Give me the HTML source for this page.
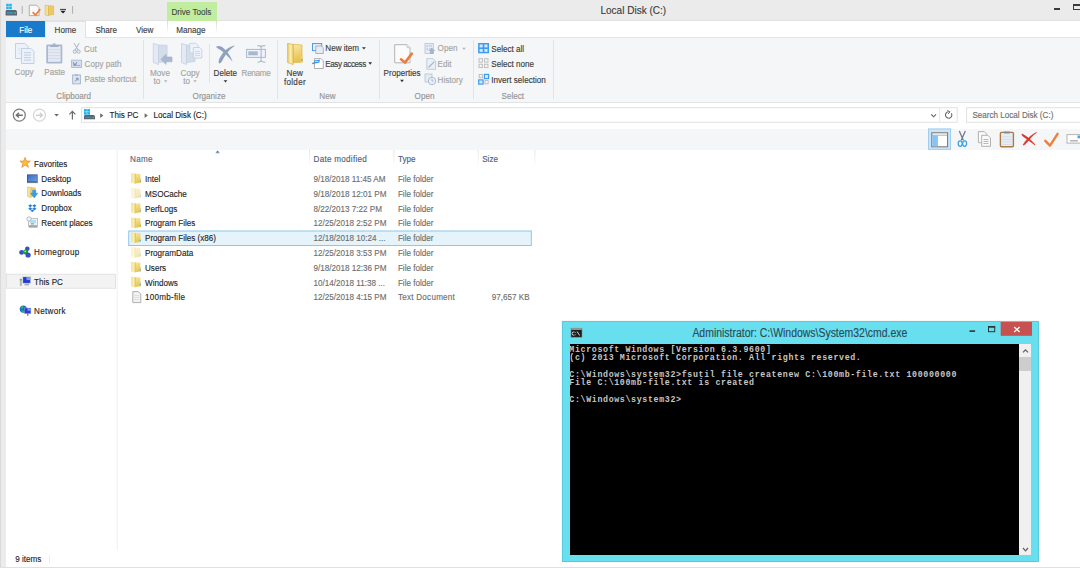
<!DOCTYPE html>
<html><head><meta charset="utf-8">
<style>
*{margin:0;padding:0;box-sizing:border-box}
html,body{width:1080px;height:568px;overflow:hidden;background:#fff}
body{position:relative;font-family:"Liberation Sans",sans-serif;font-size:8px;color:#1e1e1e}
.a{position:absolute}
.t{position:absolute;white-space:pre;line-height:8px;font-size:8.1px;transform:translateY(0.7px) scaleY(1.15);transform-origin:0 4px;-webkit-text-stroke:0.12px currentColor}
.cm{position:absolute;left:569.3px;font-family:'Liberation Mono',monospace;font-weight:bold;font-size:8.3px;line-height:8px;letter-spacing:0.64px;color:#c6c6c6;white-space:pre}
.dis{color:#a3a3a3}
.lbl{color:#939393}
</style></head><body>
<!-- window frame / title bar -->
<div class="a" style="left:0;top:0;width:1080px;height:20.5px;background:#ebebeb"></div>
<div class="a" style="left:0;top:0;width:6px;height:568px;background:#ebebeb"></div>
<div class="a" style="left:0;top:0;width:1px;height:568px;background:#dadada"></div>
<div class="a" style="left:0;top:567px;width:1080px;height:1px;background:#e0e0e0"></div>
<div class="a" style="left:6px;top:20px;width:1074px;height:1px;background:#e2e2e2"></div>

<!-- tab row -->
<div class="a" style="left:6px;top:21px;width:1074px;height:16px;background:#fff"></div>
<!-- ribbon body -->
<div class="a" style="left:6px;top:37px;width:1074px;height:65.5px;background:#f5f6f7;border-top:1px solid #e4e5e6;border-bottom:1px solid #e2e3e4"></div>
<!-- address row -->
<div class="a" style="left:6px;top:103px;width:1074px;height:25px;background:#fff"></div>
<!-- toolbar strip -->
<div class="a" style="left:6px;top:128.8px;width:1074px;height:20.9px;background:#f5f6f7"></div>

<svg class="a" style="left:0;top:0" width="1080" height="568" viewBox="0 0 1080 568">
<!-- Copy large -->
<g stroke="#c3cfe2" stroke-width="1" fill="#edf2fa">
<path d="M15.5 43.5 H25 L28 46.5 V58.5 H15.5 Z"/>
<path d="M21.5 48.5 H31 L34 51.5 V63.5 H21.5 Z"/>
</g>
<g fill="#c9d4e6"><rect x="24" y="52" width="7" height="1.2"/><rect x="24" y="54.5" width="7" height="1.2"/><rect x="24" y="57" width="7" height="1.2"/><rect x="24" y="59.5" width="7" height="1.2"/></g>
<g fill="#dfe6f1"><rect x="18" y="48" width="3" height="1"/><rect x="18" y="50.5" width="3" height="1"/><rect x="18" y="53" width="3" height="1"/></g>
<!-- Paste large -->
<rect x="46.3" y="44.4" width="16" height="19" rx="1.2" fill="#a9b7cf"/>
<rect x="48" y="46.2" width="12.6" height="15.6" fill="#e3e9f3"/>
<g fill="#d0d9e8"><rect x="48" y="49" width="12.6" height="0.8"/><rect x="48" y="52" width="12.6" height="0.8"/><rect x="48" y="55" width="12.6" height="0.8"/><rect x="48" y="58" width="12.6" height="0.8"/></g>
<rect x="50" y="45.3" width="8.6" height="1.6" fill="#9eadc8"/>
<ellipse cx="54.2" cy="44.3" rx="1.6" ry="1.1" fill="#a9b7cf"/>
<!-- Cut small -->
<g stroke="#a2b2cb" stroke-width="1" fill="none">
<path d="M74 43.2 L78.3 50.2 M79.2 43.2 L75 50.2"/>
<circle cx="74.8" cy="51.6" r="1.6"/><circle cx="78.6" cy="51.6" r="1.6"/>
</g>
<!-- Copy path -->
<rect x="71.6" y="60.2" width="10" height="7.2" fill="#d6dff0" stroke="#a9b8d0" stroke-width="0.9"/>
<path d="M73.3 62 L74.2 65.8 L75 63.5 L75.8 65.8 L76.7 62" stroke="#7487a6" stroke-width="0.8" fill="none"/>
<rect x="77.2" y="65" width="3" height="0.8" fill="#8d9fbb"/>
<!-- Paste shortcut -->
<rect x="72.6" y="75" width="7.8" height="8.8" fill="#dde5f2" stroke="#a9b8d0" stroke-width="1"/>
<rect x="74.8" y="74.2" width="3.4" height="1.5" fill="#a9b8d0"/>
<path d="M74.8 81.5 L77.8 78.5 M75.8 78.3 H78 V80.5" stroke="#6d82a4" stroke-width="0.9" fill="none"/>
<!-- Move to -->
<path d="M153.3 43.5 L158.5 45 V64.5 L153.3 62.5 Z" fill="#e3eaf5" stroke="#c4cfe0" stroke-width="0.8"/>
<path d="M158.5 45 L167 45.3 V61.5 L158.5 62.5 Z" fill="#d3ddec" stroke="#c4cfe0" stroke-width="0.8"/>
<path d="M161 59.3 L166 54.3 V57 H172 V61.8 H166 V64.5 Z" fill="#aab9d1" stroke="#9fb0cb" stroke-width="0.6"/>
<!-- Copy to -->
<path d="M181.5 43.5 L186.5 45 V64.5 L181.5 62.5 Z" fill="#e3eaf5" stroke="#c4cfe0" stroke-width="0.8"/>
<path d="M186.5 45 L195 45.3 V61.5 L186.5 62.5 Z" fill="#d3ddec" stroke="#c4cfe0" stroke-width="0.8"/>
<path d="M189.8 43.3 H196 L198 45.3 V53 H189.8 Z" fill="#eef3fa" stroke="#c4cfe0" stroke-width="0.8"/>
<path d="M193.3 47.5 H199.8 L201.8 49.5 V58 H193.3 Z" fill="#eef3fa" stroke="#c0cce0" stroke-width="0.8"/>
<g fill="#ccd6e6"><rect x="195" y="51" width="5" height="0.9"/><rect x="195" y="53" width="5" height="0.9"/><rect x="195" y="55" width="5" height="0.9"/></g>
<!-- Delete X -->
<path d="M216 46.8 C 219 44.8, 223 47, 226 50.5 C 229 54, 231.5 58, 232.5 61.8 C 230 58.5, 226.5 55, 223 52 C 220 49.5, 217 48.5, 216 46.8 Z" fill="#8ea1bf"/>
<path d="M235.3 45.5 C 231 46, 226 49, 222.5 53.5 C 219.5 57.5, 218 61, 218.8 63.3 C 220.8 64, 222 61, 224 57.5 C 227 52.5, 231 48, 235.3 45.5 Z" fill="#8ea1bf"/>
<!-- Rename -->
<rect x="246.6" y="49.4" width="18.8" height="8" fill="#eef3fb" stroke="#a9b8cf" stroke-width="1"/>
<rect x="248.3" y="51.3" width="9.5" height="4" fill="#a9b8cf"/>
<path d="M261.1 45.8 V62 M257.5 45.6 C259.5 45.6 261.1 46.5 261.1 47.5 C261.1 46.5 262.7 45.6 265.3 45.6 M257.5 62.2 C259.5 62.2 261.1 61.3 261.1 60.3 C261.1 61.3 262.7 62.2 265.3 62.2" stroke="#a9b8cf" stroke-width="1.1" fill="none"/>
<!-- New folder -->
<defs><linearGradient id="nfflap" x1="0" y1="0" x2="1" y2="0"><stop offset="0" stop-color="#eccb5f"/><stop offset="0.55" stop-color="#fbefb6"/><stop offset="1" stop-color="#efd06a"/></linearGradient>
<linearGradient id="nfback" x1="0" y1="0" x2="0.2" y2="1"><stop offset="0" stop-color="#faeaa6"/><stop offset="1" stop-color="#e8c04a"/></linearGradient></defs>
<path d="M293 44.3 L302 45 V62.3 L293 62.5 Z" fill="url(#nfback)" stroke="#dcb44a" stroke-width="0.7"/>
<path d="M287.6 43.3 L293.2 44.6 V64.6 L287.6 62.6 Z" fill="url(#nfflap)" stroke="#d9b04a" stroke-width="0.7"/>
<rect x="300.5" y="55.5" width="2.5" height="7" fill="#ecd27c"/>
<circle cx="301.8" cy="60" r="0.9" fill="#5fb3cc"/>
<!-- New item -->
<rect x="312.5" y="43.6" width="9.2" height="7" fill="#e8f1fb" stroke="#4b9be0" stroke-width="1"/>
<path d="M315.8 46 H321.5 L323.3 47.8 V53.5 H315.8 Z" fill="#e6ecf4" stroke="#9aa2ae" stroke-width="0.8"/>
<!-- Easy access -->
<path d="M314.5 58.6 H321 L323.3 60.9 V68.5 H314.5 Z" fill="#fff" stroke="#a5a5a5" stroke-width="0.9"/>
<path d="M312.3 63.8 C313.5 62.5 316 62.5 318.8 62.3 L319.3 60.2 C317 60.5 315 60.8 314 61.2" stroke="#3a8ee6" stroke-width="1.1" fill="none"/>
<!-- Properties -->
<path d="M394.7 44.7 H407 L410 47.7 V62.8 H394.7 Z" fill="#fbfbfb" stroke="#b4b4b4" stroke-width="1"/>
<path d="M407 44.7 V47.7 H410" fill="#ececec" stroke="#c4c4c4" stroke-width="0.8"/>
<path d="M401 59.3 L405 62.6 L411.8 53.6" stroke="#ec7d3f" stroke-width="2.6" fill="none" stroke-linecap="round" stroke-linejoin="round"/>
<!-- Open small -->
<rect x="425" y="43.5" width="8.3" height="10" fill="#e5ebf4" stroke="#b5c2d6" stroke-width="0.8"/>
<g fill="#a9b7cc"><rect x="426.5" y="45.5" width="1.5" height="1.2"/><rect x="429" y="45.5" width="3" height="0.8"/><rect x="426.5" y="48.5" width="1.5" height="1.2"/><rect x="429" y="48.5" width="3" height="0.8"/></g>
<path d="M430 54 V51 H428.3 L431.8 47.8 L435.3 51 H433.6 V54 Z" fill="#a4b4cc"/>
<!-- Edit small -->
<path d="M426.8 58.6 H433 L435.6 61.2 V69.3 H426.8 Z" fill="#eaf0f8" stroke="#b5c2d6" stroke-width="0.8"/>
<path d="M428.5 67.5 L434.3 61.7" stroke="#a4b4cc" stroke-width="1.2"/>
<!-- History small -->
<rect x="425" y="74" width="7" height="8" fill="#e5ebf4" stroke="#b5c2d6" stroke-width="0.8"/>
<circle cx="432" cy="81" r="3.7" fill="#eaf0f8" stroke="#a4b4cc" stroke-width="0.9"/>
<path d="M432 79 V81 H433.5" stroke="#8fa1bd" stroke-width="0.7" fill="none"/>
<!-- Select all -->
<rect x="478.1" y="43" width="10.9" height="10.3" fill="#3e9cf2"/>
<g fill="#d4e9ff"><rect x="479.6" y="44.5" width="3.1" height="2.9"/><rect x="484.4" y="44.5" width="3.1" height="2.9"/><rect x="479.6" y="49" width="3.1" height="2.9"/><rect x="484.4" y="49" width="3.1" height="2.9"/></g>
<!-- Select none -->
<g fill="none" stroke="#b8b8b8" stroke-width="0.9"><rect x="479" y="58.7" width="3.4" height="3.4"/><rect x="484.6" y="58.7" width="3.4" height="3.4"/><rect x="479" y="64.2" width="3.4" height="3.4"/><rect x="484.6" y="64.2" width="3.4" height="3.4"/></g>
<!-- Invert -->
<g fill="none" stroke="#b8b8b8" stroke-width="0.9"><rect x="479.2" y="74.5" width="3.2" height="3.2"/><rect x="485" y="80.6" width="3.2" height="3.2"/></g>
<rect x="483.8" y="73.8" width="5.4" height="5.4" fill="#3e9cf2"/><rect x="485" y="75" width="3" height="3" fill="#cfe6ff"/>
<rect x="478.1" y="79.3" width="5.6" height="5.4" fill="#3e9cf2"/><rect x="479.3" y="80.5" width="3.2" height="3" fill="#cfe6ff"/>
</svg>

<svg class="a" style="left:0;top:0" width="1080" height="568" viewBox="0 0 1080 568">
<!-- back/forward -->
<circle cx="19.3" cy="115.1" r="6" fill="none" stroke="#7b7b7b" stroke-width="1.2"/>
<path d="M22.8 115.2 H16.5 M19 112.8 L16.3 115.2 L19 117.6" fill="none" stroke="#6f6f6f" stroke-width="1.4"/>
<circle cx="39.5" cy="115.1" r="6" fill="none" stroke="#d6d6d6" stroke-width="1.2"/>
<path d="M36 115.2 H42.3 M39.8 112.8 L42.5 115.2 L39.8 117.6" fill="none" stroke="#d0d0d0" stroke-width="1.4"/>
<path d="M54.3 114 H58.9 L56.6 116.6 Z" fill="#6b6b6b"/>
<path d="M72.4 111.6 V119.4 M69.4 114.4 L72.4 111.4 L75.4 114.4" fill="none" stroke="#6b6b6b" stroke-width="1.2"/>
<!-- address box -->
<rect x="81.6" y="107.7" width="875.6" height="14.6" fill="#fff" stroke="#e1e1e1" stroke-width="1"/>
<line x1="939.7" y1="108" x2="939.7" y2="122" stroke="#e6e6e6" stroke-width="1"/>
<path d="M931.2 114.3 L933.6 116.8 L936 114.3" fill="none" stroke="#5f5f5f" stroke-width="1.1"/>
<path d="M951.3 113.2 A3.2 3.2 0 1 1 948.5 111.8" fill="none" stroke="#666" stroke-width="1.1"/>
<path d="M947.3 110.5 L950 111.9 L948 114" fill="none" stroke="#666" stroke-width="1"/>
<rect x="966.6" y="107.7" width="120" height="14.6" fill="#fff" stroke="#e1e1e1" stroke-width="1"/>
<!-- drive icon in address -->
<g fill="#1fb3ef"><rect x="84" y="109.1" width="2.8" height="2.6"/><rect x="87.2" y="109.1" width="2.8" height="2.6"/><rect x="84" y="112.1" width="2.8" height="2.6"/><rect x="87.2" y="112.1" width="2.8" height="2.6"/></g>
<path d="M84.5 115 H94 L95 116.5 V119.3 H84 V116.5 Z" fill="#56636f"/>
<rect x="85.2" y="116.6" width="6" height="1.5" fill="#3b8fc9"/>
<rect x="92.5" y="116.8" width="1.3" height="1.3" fill="#5fd35a"/>
<path d="M100.2 113.3 L103.4 115.6 L100.2 117.9 Z" fill="#6b6b6b"/>
<path d="M144.6 113.3 L147.8 115.6 L144.6 117.9 Z" fill="#6b6b6b"/>
</svg>
<div class="t" style="left:109.6px;top:110.9px;color:#1e1e1e">This PC</div>
<div class="t" style="left:153.6px;top:110.9px;color:#1e1e1e">Local Disk (C:)</div>
<div class="t" style="left:972.4px;top:111.3px;color:#6d6d6d">Search Local Disk (C:)</div>

<svg class="a" style="left:0;top:0" width="1080" height="568" viewBox="0 0 1080 568">
<!-- toolbar: preview pane selected -->
<rect x="928.5" y="128.9" width="22" height="20.5" fill="#cde4f7" stroke="#9fcdf1" stroke-width="1"/>
<rect x="931.8" y="132.8" width="15.8" height="14" fill="#fff" stroke="#727272" stroke-width="1"/>
<rect x="932.3" y="135.6" width="5.6" height="10.7" fill="#86c3f6"/>
<line x1="932" y1="135.2" x2="947.5" y2="135.2" stroke="#9a9a9a" stroke-width="0.8"/>
<!-- scissors -->
<path d="M959.3 131 L963.3 140.3 M965.3 131 L961.3 140.3" stroke="#6f7c8c" stroke-width="1.3" fill="none"/>
<ellipse cx="960.2" cy="143.6" rx="2" ry="2.8" fill="none" stroke="#3ba3e2" stroke-width="1.3"/>
<ellipse cx="964.6" cy="143.6" rx="2" ry="2.8" fill="none" stroke="#3ba3e2" stroke-width="1.3"/>
<!-- copy -->
<path d="M978.4 131.6 H984.3 L986.8 134.1 V142.7 H978.4 Z" fill="#fafafa" stroke="#a9a9a9" stroke-width="0.9"/>
<path d="M981.7 135.3 H987.8 L990.5 138 V146.3 H981.7 Z" fill="#fafafa" stroke="#a9a9a9" stroke-width="0.9"/>
<g fill="#8cb9e2"><rect x="983.5" y="139" width="5" height="0.9"/><rect x="983.5" y="141" width="5" height="0.9"/><rect x="983.5" y="143" width="5" height="0.9"/></g>
<!-- paste clipboard -->
<rect x="1000.4" y="132.4" width="13" height="14.4" rx="1" fill="#e6edf5" stroke="#a97d47" stroke-width="1.4"/>
<g fill="#cfd9e6"><rect x="1001.6" y="136.5" width="10.6" height="0.7"/><rect x="1001.6" y="139" width="10.6" height="0.7"/><rect x="1001.6" y="141.5" width="10.6" height="0.7"/><rect x="1001.6" y="144" width="10.6" height="0.7"/></g>
<rect x="1003.5" y="131.4" width="6.8" height="2" rx="0.8" fill="#8c8c8c"/>
<!-- red X -->
<path d="M1022 134 C1026 136, 1031 140, 1035 144.8 C1030.5 141.5, 1026 138.5, 1022.3 135.5 Z" fill="#d8312b" stroke="#d8312b" stroke-width="0.8"/>
<path d="M1036.5 132.4 C1031 135, 1026 139.5, 1023 145 C1024.2 145.3, 1025.5 144, 1027 142.3 C1030 138.5, 1033 135, 1036.5 132.4 Z" fill="#d8312b" stroke="#d8312b" stroke-width="0.6"/>
<!-- orange check -->
<path d="M1045.3 140.8 L1050 145.6 L1057.6 133.8" stroke="#f07e3c" stroke-width="2.4" fill="none" stroke-linecap="round" stroke-linejoin="round"/>
<!-- rename partial -->
<rect x="1067" y="134.6" width="20" height="8.5" fill="#fff" stroke="#b3b3b3" stroke-width="1"/>
<rect x="1077.5" y="135.5" width="4" height="2.8" fill="#4aa8d8"/>
<rect x="1070" y="140" width="8" height="1.6" fill="#b9b9b9"/>
</svg>

<!-- content -->
<svg class="a" style="left:0;top:0" width="1080" height="568" viewBox="0 0 1080 568">
<defs><linearGradient id="dskg" x1="0" y1="0" x2="1" y2="1"><stop offset="0" stop-color="#3a6cc4"/><stop offset="1" stop-color="#6a9ee0"/></linearGradient><linearGradient id="fflap" x1="0" y1="0" x2="1" y2="0"><stop offset="0" stop-color="#f2dc86"/><stop offset="0.5" stop-color="#faf0b8"/><stop offset="1" stop-color="#efd97f"/></linearGradient><linearGradient id="fback" x1="0" y1="0" x2="0.3" y2="1"><stop offset="0" stop-color="#f7e8a4"/><stop offset="1" stop-color="#e6c653"/></linearGradient><linearGradient id="sepg" x1="0" y1="0" x2="0" y2="1"><stop offset="0" stop-color="#e3e3e3"/><stop offset="1" stop-color="#ffffff"/></linearGradient></defs>
<line x1="117.2" y1="150" x2="117.2" y2="551" stroke="#f0f0f0" stroke-width="1"/>
<rect x="6.5" y="274.3" width="109" height="14" fill="#f3f3f3" stroke="#e3e3e3" stroke-width="1"/>
<rect x="128.7" y="231" width="402.6" height="14.5" fill="#e5f3fb" stroke="#8ec6ec" stroke-width="1"/>
<rect x="309" y="150" width="1" height="17" fill="url(#sepg)"/>
<rect x="393.4" y="150" width="1" height="17" fill="url(#sepg)"/>
<rect x="477.7" y="150" width="1" height="17" fill="url(#sepg)"/>
<rect x="534.4" y="150" width="1" height="17" fill="url(#sepg)"/>
<path d="M215.2 153.2 L217.6 150.6 L220 153.2 Z" fill="#7fa3c6"/><path d="M216.2 152.3 L217.6 150.8 L219 152.3 Z" fill="#4f7ca6"/>
<g><path d="M135.30 173.55 L140.40 173.95 V182.75 L135.30 183.55 Z" fill="url(#fback)"/><path d="M131.20 172.95 L135.40 173.55 V183.85 L131.20 182.85 Z" fill="url(#fflap)"/><line x1="135.35" y1="173.85" x2="135.35" y2="183.55" stroke="#d9bb55" stroke-width="0.7"/><rect x="139.60" y="178.55" width="1.4" height="4.2" fill="#e9d27a"/><circle cx="140.30" cy="181.25" r="0.7" fill="#4fb0c6"/></g>
<g opacity="0.45"><path d="M135.30 188.34 L140.40 188.74 V197.54 L135.30 198.34 Z" fill="url(#fback)"/><path d="M131.20 187.74 L135.40 188.34 V198.64 L131.20 197.64 Z" fill="url(#fflap)"/><line x1="135.35" y1="188.64" x2="135.35" y2="198.34" stroke="#d9bb55" stroke-width="0.7"/><rect x="139.60" y="193.34" width="1.4" height="4.2" fill="#e9d27a"/><circle cx="140.30" cy="196.04" r="0.7" fill="#4fb0c6"/></g>
<g><path d="M135.30 203.13 L140.40 203.53 V212.33 L135.30 213.13 Z" fill="url(#fback)"/><path d="M131.20 202.53 L135.40 203.13 V213.43 L131.20 212.43 Z" fill="url(#fflap)"/><line x1="135.35" y1="203.43" x2="135.35" y2="213.13" stroke="#d9bb55" stroke-width="0.7"/><rect x="139.60" y="208.13" width="1.4" height="4.2" fill="#e9d27a"/><circle cx="140.30" cy="210.83" r="0.7" fill="#4fb0c6"/></g>
<g><path d="M135.30 217.92 L140.40 218.32 V227.12 L135.30 227.92 Z" fill="url(#fback)"/><path d="M131.20 217.32 L135.40 217.92 V228.22 L131.20 227.22 Z" fill="url(#fflap)"/><line x1="135.35" y1="218.22" x2="135.35" y2="227.92" stroke="#d9bb55" stroke-width="0.7"/><rect x="139.60" y="222.92" width="1.4" height="4.2" fill="#e9d27a"/><circle cx="140.30" cy="225.62" r="0.7" fill="#4fb0c6"/></g>
<g><path d="M135.30 232.71 L140.40 233.11 V241.91 L135.30 242.71 Z" fill="url(#fback)"/><path d="M131.20 232.11 L135.40 232.71 V243.01 L131.20 242.01 Z" fill="url(#fflap)"/><line x1="135.35" y1="233.01" x2="135.35" y2="242.71" stroke="#d9bb55" stroke-width="0.7"/><rect x="139.60" y="237.71" width="1.4" height="4.2" fill="#e9d27a"/><circle cx="140.30" cy="240.41" r="0.7" fill="#4fb0c6"/></g>
<g opacity="0.45"><path d="M135.30 247.50 L140.40 247.90 V256.70 L135.30 257.50 Z" fill="url(#fback)"/><path d="M131.20 246.90 L135.40 247.50 V257.80 L131.20 256.80 Z" fill="url(#fflap)"/><line x1="135.35" y1="247.80" x2="135.35" y2="257.50" stroke="#d9bb55" stroke-width="0.7"/><rect x="139.60" y="252.50" width="1.4" height="4.2" fill="#e9d27a"/><circle cx="140.30" cy="255.20" r="0.7" fill="#4fb0c6"/></g>
<g><path d="M135.30 262.29 L140.40 262.69 V271.49 L135.30 272.29 Z" fill="url(#fback)"/><path d="M131.20 261.69 L135.40 262.29 V272.59 L131.20 271.59 Z" fill="url(#fflap)"/><line x1="135.35" y1="262.59" x2="135.35" y2="272.29" stroke="#d9bb55" stroke-width="0.7"/><rect x="139.60" y="267.29" width="1.4" height="4.2" fill="#e9d27a"/><circle cx="140.30" cy="269.99" r="0.7" fill="#4fb0c6"/></g>
<g><path d="M135.30 277.08 L140.40 277.48 V286.28 L135.30 287.08 Z" fill="url(#fback)"/><path d="M131.20 276.48 L135.40 277.08 V287.38 L131.20 286.38 Z" fill="url(#fflap)"/><line x1="135.35" y1="277.38" x2="135.35" y2="287.08" stroke="#d9bb55" stroke-width="0.7"/><rect x="139.60" y="282.08" width="1.4" height="4.2" fill="#e9d27a"/><circle cx="140.30" cy="284.78" r="0.7" fill="#4fb0c6"/></g>
<path d="M132.8 291.56999999999994 H138.3 L140.8 294.06999999999994 V302.56999999999994 H132.8 Z" fill="#f3f3f3" stroke="#a8a8a8" stroke-width="0.9"/>
<g fill="#d6d6d6"><rect x="134.1" y="295.16999999999996" width="5.4" height="0.7"/><rect x="134.1" y="297.16999999999996" width="5.4" height="0.7"/><rect x="134.1" y="299.16999999999996" width="5.4" height="0.7"/></g>
<path d="M25.1 157.4 L26.5 161 L30.4 161.1 L27.3 163.5 L28.4 167.4 L25.1 165.1 L21.8 167.4 L22.9 163.5 L19.8 161.1 L23.7 161 Z" fill="#f9bd3c" stroke="#e88a22" stroke-width="0.7"/>
<rect x="27" y="174.4" width="10.6" height="8.4" fill="#304e86"/><rect x="27.7" y="175.1" width="9.2" height="6.4" fill="url(#dskg)"/><rect x="27" y="182" width="10.6" height="1.1" fill="#6c7a8e"/>
<path d="M27.6 186.8 L31 187.6 V197.6 L27.6 196.6 Z" fill="#f6e2a0" stroke="#dcbc5a" stroke-width="0.6"/><path d="M31 187.6 L35.4 188 V195.8 L31 196.4 Z" fill="#eed07a" stroke="#dcbc5a" stroke-width="0.6"/>
<path d="M32.6 190.2 H35.8 V193.2 H37.9 L34.2 197.9 L30.5 193.2 H32.6 Z" fill="#35a0e8" stroke="#2387d4" stroke-width="0.4"/>
<path d="M28.2 205.8 L30.4 204.3 L32.3 205.8 L30.1 207.3 Z M32.3 205.8 L34.4 204.3 L36.5 205.8 L34.4 207.3 Z M28.2 208.8 L30.1 207.3 L32.3 208.8 L30.4 210.3 Z M32.3 208.8 L34.4 207.3 L36.5 208.8 L34.4 210.3 Z M30.4 210.8 L32.3 209.6 L34.3 210.8 L32.3 212 Z" fill="#1f7fe2"/>
<rect x="28.5" y="218.5" width="9" height="7" fill="#eef2f5" stroke="#a3abb3" stroke-width="0.7"/><rect x="30" y="220" width="6" height="3.2" fill="#b8dcef"/><circle cx="29" cy="219" r="2.2" fill="#f4f6f8" stroke="#8d969e" stroke-width="0.6"/><rect x="28.6" y="225.6" width="9" height="2" fill="#9aa2aa"/><rect x="31" y="223.4" width="3" height="1" fill="#3fb07a"/>
<circle cx="21.6" cy="252.4" r="2.4" fill="#3550c8"/><circle cx="27.3" cy="248.7" r="2.3" fill="#3550c8"/><circle cx="25.6" cy="252" r="2.5" fill="#1f9d2c"/><circle cx="28.1" cy="255" r="2.6" fill="#3550c8"/><circle cx="25.2" cy="251.4" r="0.8" fill="#bfe8bf"/>
<rect x="22.5" y="276.5" width="8.3" height="7" fill="#d8dde2" stroke="#c4c9ce" stroke-width="0.5"/><rect x="23.1" y="277.1" width="7.1" height="5.8" fill="#2338d8"/><rect x="26.5" y="277.1" width="3.7" height="3" fill="#7d9fe6"/><rect x="24.5" y="283.6" width="4.5" height="1.8" fill="#a9adb1"/><rect x="19.8" y="278.6" width="2.1" height="7.4" fill="#b9bcbf"/><rect x="19.8" y="279.2" width="2.1" height="1.1" fill="#4fb84a"/>
<circle cx="23.3" cy="309.1" r="3.6" fill="#1c6fd0"/><path d="M20.3 307.6 Q21.5 305.8 23.5 306.2 L22.5 308.8 Z" fill="#2fc63f"/><path d="M21.6 310.2 Q23.8 310 24.3 312.3 L22.3 312.4 Z" fill="#2fc63f"/><rect x="24.4" y="308" width="6.5" height="5.7" fill="#2a3ad6" stroke="#aab4e6" stroke-width="0.4"/><rect x="27.5" y="308.3" width="3.2" height="2.5" fill="#7f97ea"/><rect x="27.2" y="313.7" width="1.2" height="2.2" fill="#6f7378"/>
<line x1="49.5" y1="555" x2="49.5" y2="563" stroke="#ececec" stroke-width="1"/>
</svg>
<div class="t" style="left:145px;top:174.99px;color:#1e1e1e">Intel</div>
<div class="t" style="left:313.6px;top:174.99px;color:#6d6d6d">9/18/2018 11:45 AM</div>
<div class="t" style="left:397.9px;top:174.99px;color:#6d6d6d">File folder</div>
<div class="t" style="left:145px;top:189.78px;color:#1e1e1e">MSOCache</div>
<div class="t" style="left:313.6px;top:189.78px;color:#6d6d6d">9/18/2018 12:01 PM</div>
<div class="t" style="left:397.9px;top:189.78px;color:#6d6d6d">File folder</div>
<div class="t" style="left:145px;top:204.57px;color:#1e1e1e">PerfLogs</div>
<div class="t" style="left:313.6px;top:204.57px;color:#6d6d6d">8/22/2013 7:22 PM</div>
<div class="t" style="left:397.9px;top:204.57px;color:#6d6d6d">File folder</div>
<div class="t" style="left:145px;top:219.36px;color:#1e1e1e">Program Files</div>
<div class="t" style="left:313.6px;top:219.36px;color:#6d6d6d">12/25/2018 2:52 PM</div>
<div class="t" style="left:397.9px;top:219.36px;color:#6d6d6d">File folder</div>
<div class="t" style="left:145px;top:234.15px;color:#1e1e1e">Program Files (x86)</div>
<div class="t" style="left:313.6px;top:234.15px;color:#6d6d6d">12/18/2018 10:24 ...</div>
<div class="t" style="left:397.9px;top:234.15px;color:#6d6d6d">File folder</div>
<div class="t" style="left:145px;top:248.94px;color:#1e1e1e">ProgramData</div>
<div class="t" style="left:313.6px;top:248.94px;color:#6d6d6d">12/25/2018 3:53 PM</div>
<div class="t" style="left:397.9px;top:248.94px;color:#6d6d6d">File folder</div>
<div class="t" style="left:145px;top:263.73px;color:#1e1e1e">Users</div>
<div class="t" style="left:313.6px;top:263.73px;color:#6d6d6d">9/18/2018 12:36 PM</div>
<div class="t" style="left:397.9px;top:263.73px;color:#6d6d6d">File folder</div>
<div class="t" style="left:145px;top:278.52px;color:#1e1e1e">Windows</div>
<div class="t" style="left:313.6px;top:278.52px;color:#6d6d6d">10/14/2018 11:38 ...</div>
<div class="t" style="left:397.9px;top:278.52px;color:#6d6d6d">File folder</div>
<div class="t" style="left:145px;top:293.31px;color:#1e1e1e;letter-spacing:0.24px">100mb-file</div>
<div class="t" style="left:313.6px;top:293.31px;color:#6d6d6d">12/25/2018 4:15 PM</div>
<div class="t" style="left:397.9px;top:293.31px;color:#6d6d6d;letter-spacing:0.25px">Text Document</div>
<div class="t" style="right:550.4px;top:293.31px;color:#6d6d6d">97,657 KB</div>
<div class="t" style="left:130px;top:155px;color:#526683;letter-spacing:0.3px">Name</div>
<div class="t" style="left:313.6px;top:154.8px;color:#4c607a;letter-spacing:0.27px">Date modified</div>
<div class="t" style="left:397.9px;top:154.8px;color:#4c607a">Type</div>
<div class="t" style="left:482.2px;top:154.8px;color:#4c607a">Size</div>
<div class="t" style="left:34.1px;top:159.84px;color:#1e1e1e">Favorites</div>
<div class="t" style="left:41.3px;top:174.74px;color:#1e1e1e">Desktop</div>
<div class="t" style="left:41.3px;top:189.34px;color:#1e1e1e">Downloads</div>
<div class="t" style="left:41.3px;top:204.14px;color:#1e1e1e">Dropbox</div>
<div class="t" style="left:41.3px;top:218.84px;color:#1e1e1e">Recent places</div>
<div class="t" style="left:34.1px;top:248.34px;color:#1e1e1e;letter-spacing:0.37px">Homegroup</div>
<div class="t" style="left:34.1px;top:277.64px;color:#1e1e1e">This PC</div>
<div class="t" style="left:34.1px;top:307.24px;color:#1e1e1e;letter-spacing:0.3px">Network</div>
<div class="t" style="left:15.2px;top:555.4px;color:#1e1e1e">9 items</div>

<!-- cmd window -->
<div class="a" style="left:562.2px;top:321.2px;width:476.8px;height:240.6px;background:#68dfef;border:1px solid rgba(0,60,80,0.12);box-shadow:0 0 1.5px rgba(0,0,0,0.12)"></div>
<div class="a" style="left:569.8px;top:344.3px;width:449.5px;height:210.7px;background:#000"></div>
<div class="a" style="left:1019.3px;top:344.3px;width:11.9px;height:210.5px;background:#f0f0f0"></div>
<div class="a" style="left:1019.3px;top:356.5px;width:11.9px;height:14.9px;background:#cdcdcd"></div>
<svg class="a" style="left:0;top:0" width="1080" height="568" viewBox="0 0 1080 568">
<path d="M1023 352.4 L1025.5 349.8 L1028 352.4" fill="none" stroke="#606060" stroke-width="1.2"/>
<path d="M1023 548 L1025.5 550.8 L1028 548" fill="none" stroke="#606060" stroke-width="1.2"/>
<rect x="1000.7" y="322" width="31.3" height="13.8" fill="#c75050"/>
<path d="M1014.2 327 L1019.6 332 M1019.6 327 L1014.2 332" stroke="#fff" stroke-width="1.3"/>
<rect x="969.5" y="330.3" width="5.6" height="1.6" fill="#333"/>
<rect x="988.5" y="326.6" width="6.2" height="5.1" fill="none" stroke="#333" stroke-width="1"/>
<rect x="988" y="326.1" width="7.2" height="1.6" fill="#333"/>
<rect x="571" y="328.2" width="11" height="9" fill="#1a1a1a" stroke="#7a8a90" stroke-width="0.6"/>
<rect x="571.3" y="328.5" width="10.4" height="1.2" fill="#c8c8c8"/>
<path d="M574.6 332 Q572.2 331.2 572.1 333.5 Q572.2 335.9 574.6 335.1" fill="none" stroke="#d8d8d8" stroke-width="0.9"/><rect x="575.3" y="332.2" width="0.8" height="0.8" fill="#d0d0d0"/><rect x="575.3" y="334.4" width="0.8" height="0.8" fill="#d0d0d0"/><path d="M577.1 331.5 L579.6 335.5" stroke="#d8d8d8" stroke-width="1"/>
</svg>
<div class="t" style="left:692.4px;top:327.8px;font-size:10.46px;line-height:10.46px;color:#2a4a55">Administrator: C:\Windows\System32\cmd.exe</div>
<div class="cm" style="top:345.60px">Microsoft Windows [Version 6.3.9600]</div>
<div class="cm" style="top:354.07px">(c) 2013 Microsoft Corporation. All rights reserved.</div>
<div class="cm" style="top:371.01px">C:\Windows\system32&gt;fsutil file createnew C:\100mb-file.txt 100000000</div>
<div class="cm" style="top:379.48px">File C:\100mb-file.txt is created</div>
<div class="cm" style="top:396.42px">C:\Windows\system32&gt;</div>

<!-- quick access / title -->
<svg class="a" style="left:0;top:0" width="1080" height="40" viewBox="0 0 1080 40">
<g fill="#1fb3ef"><rect x="6.2" y="3.8" width="2.6" height="2.5"/><rect x="9.2" y="3.8" width="2.6" height="2.5"/><rect x="6.2" y="6.7" width="2.6" height="2.5"/><rect x="9.2" y="6.7" width="2.6" height="2.5"/></g>
<path d="M6.2 10 H16 L17 11.5 V15.4 H5.6 V11.5 Z" fill="#5a6671"/>
<rect x="6.8" y="12" width="6.5" height="1.8" fill="#3b8fc9"/>
<rect x="14.5" y="12.3" width="1.4" height="1.4" fill="#5fd35a"/>
<line x1="22.2" y1="6" x2="22.2" y2="13.7" stroke="#9a9a9a" stroke-width="0.8"/>
<path d="M29.3 5.2 H36.5 L39 7.7 V15.6 H29.3 Z" fill="#fafafa" stroke="#a8a8a8" stroke-width="0.9"/>
<path d="M33.2 12.6 L35.5 15 L39.8 9.8" stroke="#ec7d3f" stroke-width="1.8" fill="none" stroke-linecap="round"/>
<path d="M45.2 5 L48.5 5.8 V15.9 L45.2 14.9 Z" fill="#f6e098" stroke="#d9b550" stroke-width="0.6"/>
<path d="M48.5 5.8 L53.6 6 V14.6 L48.5 15.2 Z" fill="#ecc965" stroke="#d9b550" stroke-width="0.6"/>
<rect x="60" y="8.9" width="6" height="0.9" fill="#222"/>
<path d="M60.3 10.8 H65.7 L63 13.4 Z" fill="#222"/>
<line x1="72.6" y1="6" x2="72.6" y2="13.7" stroke="#9a9a9a" stroke-width="0.8"/>
</svg>

<div class="t" style="left:600.5px;top:4.8px;font-size:10px;line-height:10px;color:#3a3a3a">Local Disk (C:)</div>
<div class="a" style="left:1054.3px;top:8px;width:6px;height:2px;background:#3a3a3a"></div>
<div class="a" style="left:1073px;top:4px;width:9px;height:6px;border:1px solid #3a3a3a;border-top-width:2px"></div>
<!-- drive tools -->
<div class="a" style="left:166.7px;top:2.2px;width:50px;height:18.6px;background:#c0eda0"></div>
<div class="t" style="left:171.4px;top:8.2px;color:#3d4a3d">Drive Tools</div>
<div class="a" style="left:166.5px;top:21px;width:1px;height:13px;background:linear-gradient(#d9d9d9,#fff)"></div>
<div class="a" style="left:216px;top:21px;width:1px;height:13px;background:linear-gradient(#d9d9d9,#fff)"></div>
<!-- tabs -->
<div class="a" style="left:6px;top:21px;width:39px;height:16px;background:#1979ca"></div>
<div class="t" style="left:19.2px;top:26px;color:#fff">File</div>
<div class="a" style="left:45px;top:21px;width:40.5px;height:17px;background:#f5f6f7;border:1px solid #e1e2e3;border-bottom:none;border-left-color:#e8e9ea"></div>
<div class="t" style="left:54.6px;top:26.2px;color:#3c3c3c">Home</div>
<div class="t" style="left:95.4px;top:26px;color:#3c3c3c">Share</div>
<div class="t" style="left:135.9px;top:26px;color:#3c3c3c">View</div>
<div class="t" style="left:176.3px;top:26px;color:#3c3c3c">Manage</div>

<svg class="a" style="left:0;top:0" width="1080" height="100" viewBox="0 0 1080 100"><path d="M163.90 80.30 H167.50 L165.70 82.50 Z" fill="#b5b5b5"/><path d="M193.20 80.30 H196.80 L195.00 82.50 Z" fill="#b5b5b5"/><path d="M223.60 80.25 H227.40 L225.50 82.55 Z" fill="#333"/><path d="M362.00 47.15 H365.80 L363.90 49.45 Z" fill="#333"/><path d="M368.30 62.35 H372.10 L370.20 64.65 Z" fill="#333"/><path d="M462.20 47.70 H465.80 L464.00 49.90 Z" fill="#b5b5b5"/><path d="M400.10 79.85 H403.90 L402.00 82.15 Z" fill="#333"/></svg>
<!-- ribbon text: Clipboard -->
<div class="t dis" style="left:14.6px;top:68px">Copy</div>
<div class="t dis" style="left:44.3px;top:68px">Paste</div>
<div class="t dis" style="left:84.1px;top:44.6px">Cut</div>
<div class="t dis" style="left:84.6px;top:60px">Copy path</div>
<div class="t dis" style="left:84.6px;top:75.4px">Paste shortcut</div>
<div class="t lbl" style="left:56.3px;top:91.7px">Clipboard</div>
<div class="a" style="left:143px;top:40px;width:1px;height:59px;background:#e2e3e4"></div>
<!-- Organize -->
<div class="t dis" style="left:150.1px;top:68.8px">Move</div>
<div class="t dis" style="left:153.4px;top:77px">to</div>
<div class="t dis" style="left:180.6px;top:68.8px">Copy</div>
<div class="t dis" style="left:183.2px;top:77px">to</div>
<div class="a" style="left:208.5px;top:44px;width:1px;height:38.5px;background:#e2e3e4"></div>
<div class="t" style="left:213.6px;top:68.8px;color:#3a3a3a">Delete</div>

<div class="t dis" style="left:241.6px;top:68.8px;letter-spacing:-0.3px">Rename</div>
<div class="t lbl" style="left:192.6px;top:91.7px">Organize</div>
<div class="a" style="left:277px;top:40px;width:1px;height:59px;background:#e2e3e4"></div>
<!-- New -->
<div class="t" style="left:286.6px;top:68.8px;color:#3a3a3a">New</div>
<div class="t" style="left:283.9px;top:77.5px;color:#3a3a3a;letter-spacing:0.3px">folder</div>
<div class="t" style="left:325.3px;top:43.9px;color:#3a3a3a">New item</div>
<div class="t" style="left:325.3px;top:59.7px;color:#3a3a3a;letter-spacing:-0.45px">Easy access</div>
<div class="t lbl" style="left:319.3px;top:91.7px">New</div>
<div class="a" style="left:379px;top:40px;width:1px;height:59px;background:#e2e3e4"></div>
<!-- Open -->
<div class="t" style="left:383.6px;top:68.8px;color:#3a3a3a">Properties</div>

<div class="t dis" style="left:437.6px;top:44px">Open</div>
<div class="t dis" style="left:437.6px;top:60.2px">Edit</div>
<div class="t dis" style="left:437.6px;top:75.5px">History</div>
<div class="t lbl" style="left:414.6px;top:91.7px">Open</div>
<div class="a" style="left:472.5px;top:40px;width:1px;height:59px;background:#e2e3e4"></div>
<!-- Select -->
<div class="t" style="left:491.3px;top:44.7px;color:#3a3a3a">Select all</div>
<div class="t" style="left:491.3px;top:60.2px;color:#3a3a3a">Select none</div>
<div class="t" style="left:491.3px;top:75.5px;color:#3a3a3a">Invert selection</div>
<div class="t lbl" style="left:501.6px;top:91.7px">Select</div>
<div class="a" style="left:553px;top:40px;width:1px;height:59px;background:#e2e3e4"></div>
</body></html>
